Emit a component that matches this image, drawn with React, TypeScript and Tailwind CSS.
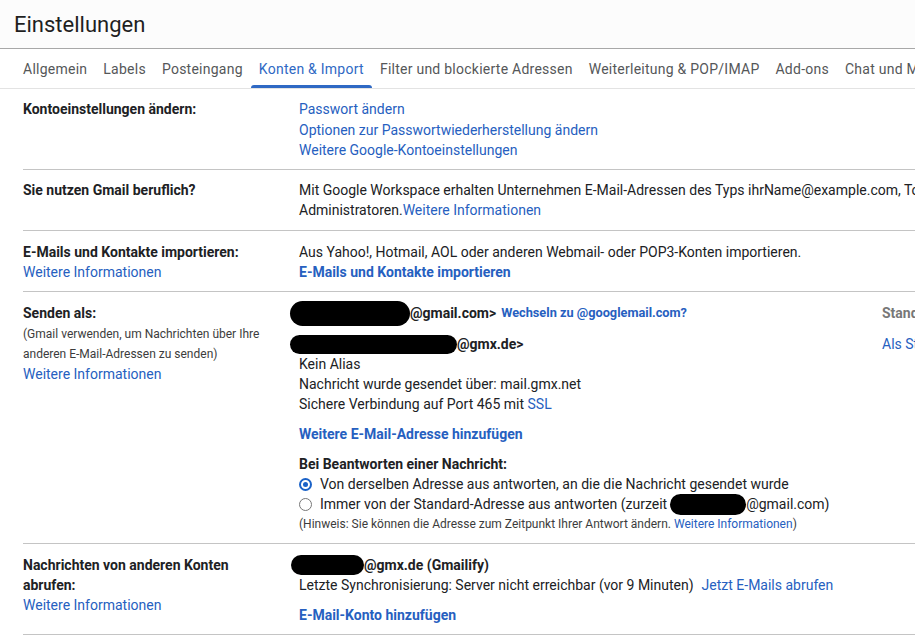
import React from "react";

const tabs = [
  "Allgemein",
  "Labels",
  "Posteingang",
  "Konten & Import",
  "Filter und blockierte Adressen",
  "Weiterleitung & POP/IMAP",
  "Add-ons",
  "Chat und Meet",
  "Erweitert",
];

function Link({ children, bold = false, className = "" }: { children: React.ReactNode; bold?: boolean; className?: string }) {
  return (
    <span className={`text-[#2660c0] cursor-pointer ${bold ? "font-bold" : ""} ${className}`}>{children}</span>
  );
}

// Black marker strokes that hide personal addresses
function Redact({ w, h, className = "" }: { w: string; h: string; className?: string }) {
  return <span className={`inline-block shrink-0 bg-black rounded-full ${w} ${h} ${className}`} />;
}

function Row({ label, children, className = "" }: { label: React.ReactNode; children: React.ReactNode; className?: string }) {
  return (
    <div className={`flex border-b border-[#c4c4c4] ${className}`}>
      <div className="w-[276px] shrink-0">{label}</div>
      <div className="flex-1 min-w-0">{children}</div>
    </div>
  );
}

function Radio({ checked }: { checked?: boolean }) {
  return checked ? (
    <span className="w-[13px] h-[13px] rounded-full border-2 border-[#1a62c8] flex items-center justify-center shrink-0">
      <span className="w-[5px] h-[5px] rounded-full bg-[#1a62c8]" />
    </span>
  ) : (
    <span className="w-[13px] h-[13px] rounded-full border border-[#777] shrink-0" />
  );
}

export default function App() {
  return (
    <div className="w-[915px] h-[644px] overflow-hidden bg-white text-[#202124] font-['Roboto','Liberation_Sans',sans-serif]">
      <header className="h-[49px] flex items-center pl-[14px] border-b border-[#a8a8a8] bg-[#fcfcfc] text-[22px] text-[#1f1f1f]">
        Einstellungen
      </header>

      <nav className="h-[40px] flex pl-[15px] border-b border-[#e3e3e3] whitespace-nowrap text-[14px] tracking-[0.25px] text-[#555759]">
        {tabs.map((t) => {
          const active = t === "Konten & Import";
          return (
            <div key={t} className={`relative px-2 pt-px flex items-center ${active ? "text-[#2f69c4]" : ""}`}>
              {t}
              {active && <span className="absolute left-0 right-0 bottom-0 h-[3px] bg-[#2f69c4] rounded-t-sm" />}
            </div>
          );
        })}
      </nav>

      <div className="pl-[23px] w-[1400px] text-[14px] leading-5 whitespace-nowrap">
        <Row
          className="pt-[10px] pb-[9px]"
          label={<div className="font-bold">Kontoeinstellungen ändern:</div>}
        >
          <div><Link>Passwort ändern</Link></div>
          <div className="mt-px"><Link>Optionen zur Passwortwiederherstellung ändern</Link></div>
          <div><Link>Weitere Google-Kontoeinstellungen</Link></div>
        </Row>

        <Row
          className="pt-[10px] pb-[10px]"
          label={<div className="font-bold">Sie nutzen Gmail beruflich?</div>}
        >
          <div>
            Mit Google Workspace erhalten Unternehmen E-Mail-Adressen des Typs ihrName@example.com, Tools für die
            Zusammenarbeit und Funktionen für
          </div>
          <div>
            Administratoren.<Link>Weitere Informationen</Link>
          </div>
        </Row>

        <Row
          className="pt-[11px] pb-[9px]"
          label={
            <>
              <div className="font-bold">E-Mails und Kontakte importieren:</div>
              <div><Link>Weitere Informationen</Link></div>
            </>
          }
        >
          <div>Aus Yahoo!, Hotmail, AOL oder anderen Webmail- oder POP3-Konten importieren.</div>
          <div><Link bold>E-Mails und Kontakte importieren</Link></div>
        </Row>

        <Row
          className="pt-[11px] pb-[9px]"
          label={
            <>
              <div className="font-bold">Senden als:</div>
              <div className="text-[12px] text-[#3c3c3c] mt-px">(Gmail verwenden, um Nachrichten über Ihre</div>
              <div className="text-[12px] text-[#3c3c3c]">anderen E-Mail-Adressen zu senden)</div>
              <div><Link>Weitere Informationen</Link></div>
            </>
          }
        >
          <div className="flex">
            <div className="w-[583px] shrink-0">
              <div className="flex items-center h-5 font-bold">
                <Redact w="w-[120px]" h="h-[25px]" className="-ml-[9px]" />
                <span>@gmail.com&gt;</span>
                <Link bold className="text-[12.75px] ml-[5px]">Wechseln zu @googlemail.com?</Link>
              </div>
              <div className="flex items-center h-5 mt-[11px] font-bold">
                <Redact w="w-[167px]" h="h-[19px]" className="-ml-[9px]" />
                <span>@gmx.de&gt;</span>
              </div>
              <div>Kein Alias</div>
              <div>Nachricht wurde gesendet über: mail.gmx.net</div>
              <div>
                Sichere Verbindung auf Port 465 mit <Link>SSL</Link>
              </div>
              <div className="mt-[10px]"><Link bold>Weitere E-Mail-Adresse hinzufügen</Link></div>
              <div className="mt-[10px] font-bold">Bei Beantworten einer Nachricht:</div>
              <div className="flex items-center h-5 gap-2">
                <Radio checked />
                <span>Von derselben Adresse aus antworten, an die die Nachricht gesendet wurde</span>
              </div>
              <div className="flex items-center h-5 gap-2">
                <Radio />
                <span className="flex items-center">
                  <span>Immer von der Standard-Adresse aus antworten (zurzeit</span>
                  <Redact w="w-[76px]" h="h-[21px]" className="ml-[3px]" />
                  <span>@gmail.com)</span>
                </span>
              </div>
              <div className="text-[12px] text-[#3c3c3c]">
                (Hinweis: Sie können die Adresse zum Zeitpunkt Ihrer Antwort ändern. <Link>Weitere Informationen</Link>)
              </div>
            </div>
            <div>
              <div className="h-5 font-bold text-[#777]">Standard</div>
              <div className="mt-[11px]"><Link>Als Standard festlegen</Link></div>
            </div>
          </div>
        </Row>

        <Row
          className="pt-[11px] pb-[9px]"
          label={
            <>
              <div className="font-bold">Nachrichten von anderen Konten</div>
              <div className="font-bold">abrufen:</div>
              <div><Link>Weitere Informationen</Link></div>
            </>
          }
        >
          <div className="flex items-center h-5 font-bold">
            <Redact w="w-[73px]" h="h-[20px]" className="-ml-[8px]" />
            <span>@gmx.de (Gmailify)</span>
          </div>
          <div>
            Letzte Synchronisierung: Server nicht erreichbar (vor 9 Minuten)
            <Link className="ml-2">Jetzt E-Mails abrufen</Link>
          </div>
          <div className="mt-[10px]"><Link bold>E-Mail-Konto hinzufügen</Link></div>
        </Row>
      </div>
    </div>
  );
}
